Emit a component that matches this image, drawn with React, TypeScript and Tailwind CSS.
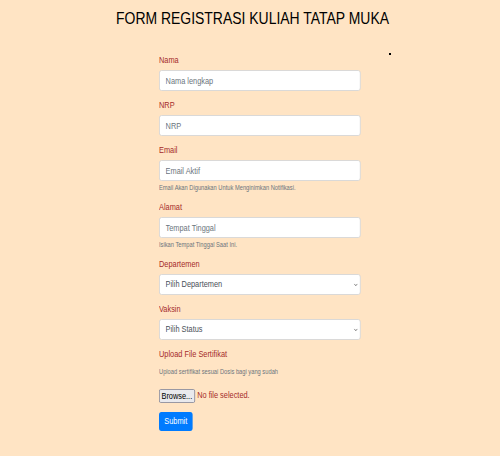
import { ChevronDown } from 'lucide-react'

function Field({ label, placeholder, help }: { label: string; placeholder: string; help?: string }) {
  return (
    <div className="mb-2">
      <label className="block h-3 mb-1 text-[9px] leading-3 text-[#a52a2a]">{label}</label>
      <input
        type="text"
        placeholder={placeholder}
        className="block w-full h-[21px] pl-[7px] bg-white border border-[#d6d6d6] rounded-[3px] text-[9px] text-[#495057] placeholder:text-[#6c757d] outline-none"
      />
      {help && <div className="mt-px h-[11px] text-[7px] leading-[11px] text-[#6c757d]">{help}</div>}
    </div>
  )
}

function SelectField({ label, placeholder }: { label: string; placeholder: string }) {
  return (
    <div className="mb-2">
      <label className="block h-3 mb-1 text-[9px] leading-3 text-[#a52a2a]">{label}</label>
      <div className="relative">
        <select className="block w-full h-[21px] pl-[7px] bg-white border border-[#d6d6d6] rounded-[3px] text-[9px] text-[#495057] appearance-none outline-none">
          <option>{placeholder}</option>
        </select>
        <ChevronDown className="absolute right-[3px] top-[8px] w-[6px] h-[6px] text-[#555]" strokeWidth={3} />
      </div>
    </div>
  )
}

export default function App() {
  return (
    <div className="relative min-h-[456px] bg-[#ffe4c4] font-['Liberation_Sans',Arial,sans-serif]">
      <h1 className="pt-2 pl-[6px] text-center text-[16.5px] leading-5 text-black">
        <span className="inline-block scale-x-[0.845]">FORM REGISTRASI KULIAH TATAP MUKA</span>
      </h1>
      <div className="absolute left-[389px] top-[53px] w-[2px] h-[2px] bg-black" />

      {/* the reference text is narrow, so the whole form is squeezed horizontally */}
      <form className="ml-[159px] w-[246px] mt-[26px] scale-x-[0.82] origin-left" onSubmit={(e) => e.preventDefault()}>
        <Field label="Nama" placeholder="Nama lengkap" />
        <Field label="NRP" placeholder="NRP" />
        <Field label="Email" placeholder="Email Aktif" help="Email Akan Digunakan Untuk Menginimkan Notifikasi." />
        <Field label="Alamat" placeholder="Tempat Tinggal" help="Isikan Tempat Tinggal Saat Ini." />
        <SelectField label="Departemen" placeholder="Pilih Departemen" />
        <SelectField label="Vaksin" placeholder="Pilih Status" />

        <label className="block h-3 text-[9px] leading-3 text-[#a52a2a]">Upload File Sertifikat</label>
        <div className="mt-[7px] h-[10px] text-[7px] leading-[10px] text-[#6c757d]">Upload sertifikat sesuai Dosis bagi yang sudah</div>
        <div className="mt-3 flex items-center h-[14px]">
          <button type="button" className="h-[14px] px-[2px] bg-[#e9e9ed] border border-[#8f8f9d] rounded-[2px] text-[9px] leading-3 text-black">
            Browse...
          </button>
          <span className="ml-[3px] text-[9px] text-[#a52a2a]">No file selected.</span>
        </div>
        <button type="submit" className="mt-[9px] block w-[41px] h-[19px] bg-[#007bff] rounded-[3px] text-[9px] text-white">
          Submit
        </button>
      </form>
    </div>
  )
}
